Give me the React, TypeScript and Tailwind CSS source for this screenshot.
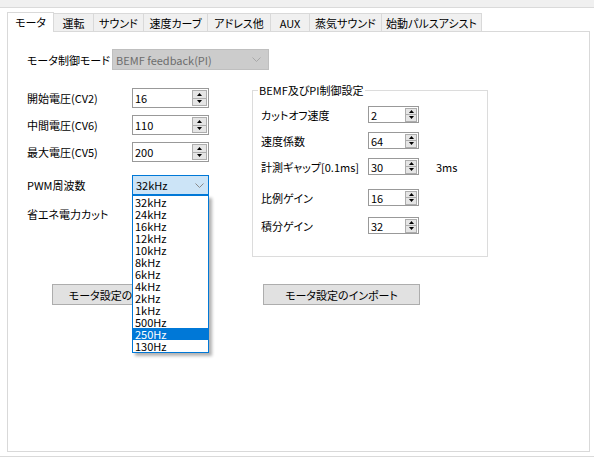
import React from 'react';

const tabs = [
  { label: 'モータ', w: 'w-[47px]' },
  { label: '運転', w: 'w-[40px]' },
  { label: 'サウンド', w: 'w-[50px]' },
  { label: '速度カーブ', w: 'w-[64px]' },
  { label: 'アドレス他', w: 'w-[63px]' },
  { label: 'AUX', w: 'w-[39px]' },
  { label: '蒸気サウンド', w: 'w-[72px]' },
  { label: '始動パルスアシスト', w: 'w-[100px]' },
];

const pwmOptions = [
  '32kHz', '24kHz', '16kHz', '12kHz', '10kHz', '8kHz', '6kHz',
  '4kHz', '2kHz', '1kHz', '500Hz', '250Hz', '130Hz',
];

function Chevron({ color = '#888888' }: { color?: string }) {
  return (
    <svg width="9" height="5" viewBox="0 0 9 5" className="shrink-0">
      <polyline points="0.5,0.5 4.5,4.5 8.5,0.5" fill="none" stroke={color} strokeWidth="1" />
    </svg>
  );
}

// numeric up/down arrows at the right of a box
function Spin({ small }: { small?: boolean }) {
  return (
    <div
      className={`flex shrink-0 flex-col border border-[#adadad] bg-[#e5e5e5] ${
        small ? 'h-[14px] w-[12px]' : 'h-[16px] w-[15px]'
      }`}
    >
      <div className="flex flex-1 items-center justify-center border-b border-[#adadad]">
        <svg width="5" height="3" viewBox="0 0 5 3">
          <polygon points="0,3 2.5,0 5,3" fill="#000" />
        </svg>
      </div>
      <div className="flex flex-1 items-center justify-center">
        <svg width="5" height="3" viewBox="0 0 5 3">
          <polygon points="0,0 5,0 2.5,3" fill="#000" />
        </svg>
      </div>
    </div>
  );
}

function NumBox({ value, small }: { value: string; small?: boolean }) {
  return (
    <div
      className={`flex shrink-0 items-center justify-between border border-[#999999] bg-white pl-[2px] pr-[1px] ${
        small ? 'h-[17px] w-[51px]' : 'h-[20px] w-[77px]'
      }`}
    >
      <span>{value}</span>
      <Spin small={small} />
    </div>
  );
}

function LeftRow({ label, value, mt }: { label: string; value: string; mt: string }) {
  return (
    <div className={`flex items-center ${mt}`}>
      <span className="w-[105px]">{label}</span>
      <NumBox value={value} />
    </div>
  );
}

const bemfRows = [
  { label: 'カットオフ速度', value: '2', mt: 'mt-0' },
  { label: '速度係数', value: '64', mt: 'mt-[9px]' },
  { label: '計測ギャップ[0.1ms]', value: '30', mt: 'mt-[9px]', extra: '3ms' },
  { label: '比例ゲイン', value: '16', mt: 'mt-[14px]' },
  { label: '積分ゲイン', value: '32', mt: 'mt-[11px]' },
];

export default function App() {
  return (
    <div
      className="relative h-[457px] w-[594px] overflow-hidden whitespace-nowrap bg-white text-[11px] leading-[14px] text-black [font-feature-settings:'palt']"
      style={{ fontFamily: '"Noto Sans CJK JP", "Noto Sans", sans-serif' }}
    >
      {/* top strip */}
      <div className="h-[8px] border-b border-[#dadada] bg-[#f0f0f0]" />

      {/* tab headers */}
      <div className="flex h-[23px] items-end pl-[7px]">
        {tabs.map((t, i) =>
          i === 0 ? (
            <div
              key={t.label}
              className={`relative z-10 -mb-[1px] flex h-[20px] items-center justify-center border-x border-t border-[#d9d9d9] bg-white pb-[1px] ${t.w}`}
            >
              {t.label}
            </div>
          ) : (
            <div
              key={t.label}
              className={`flex h-[18px] items-center justify-center border-r border-t border-[#d9d9d9] bg-[#f0f0f0] ${t.w}`}
            >
              {t.label}
            </div>
          )
        )}
      </div>

      {/* tab page */}
      <div className="relative ml-[7px] h-[421px] w-[583px] border border-[#d9d9d9] bg-white">
        <div className="flex items-center pl-[19px] pt-[17px]">
          <span className="w-[85px]">モータ制御モード</span>
          <div className="flex h-[21px] w-[157px] items-center justify-between border border-[#bfbfbf] bg-[#cccccc] pl-[3px] pr-[7px] text-[#6d6d6d]">
            <span>BEMF feedback(PI)</span>
            <Chevron color="#a8a8a8" />
          </div>
        </div>

        <div className="flex items-start">
          <div className="pl-[19px]">
            <LeftRow label="開始電圧(CV2)" value="16" mt="mt-[18px]" />
            <LeftRow label="中間電圧(CV6)" value="110" mt="mt-[7px]" />
            <LeftRow label="最大電圧(CV5)" value="200" mt="mt-[7px]" />
            <div className="mt-[13px] flex items-center">
              <span className="w-[105px]">PWM周波数</span>
              <div className="flex h-[20px] w-[77px] items-center justify-between border border-[#0078d7] bg-[#cce4f7] pl-[3px] pr-[4px]">
                <span>32kHz</span>
                <Chevron />
              </div>
            </div>
            <div className="mt-[9px] flex h-[20px] items-center">
              <span className="w-[105px]">省エネ電力カット</span>
            </div>
          </div>

          <div className="relative ml-[43px] mt-[20px] h-[167px] w-[236px] border border-[#dcdcdc] pl-[8px] pt-[15px]">
            <span className="absolute -top-[8px] left-[5px] bg-white px-[1px]">BEMF及びPI制御設定</span>
            {bemfRows.map((r) => (
              <div key={r.label} className={`flex items-center ${r.mt}`}>
                <span className="w-[107px]">{r.label}</span>
                <NumBox value={r.value} small />
                {r.extra && <span className="ml-[17px]">{r.extra}</span>}
              </div>
            ))}
          </div>
        </div>

        <div className="mt-[27px] flex pl-[44px]">
          <button className="h-[21px] w-[157px] border border-[#adadad] bg-[#e1e1e1]">
            モータ設定のエクスポート
          </button>
          <button className="ml-[54px] h-[21px] w-[157px] border border-[#adadad] bg-[#e1e1e1]">
            モータ設定のインポート
          </button>
        </div>

        {/* open PWM list */}
        <div className="absolute left-[124px] top-[163px] z-20 w-[77px] border border-[#0078d7] bg-white shadow-[3px_3px_3px_rgba(0,0,0,0.3)]">
          {pwmOptions.map((o) => (
            <div
              key={o}
              className={`h-[12px] pl-[2px] leading-[12px] ${o === '250Hz' ? 'bg-[#0078d7] text-white' : ''}`}
            >
              {o}
            </div>
          ))}
        </div>
      </div>

      <div className="mt-[4px] h-[1px] bg-[#dadada]" />
    </div>
  );
}
